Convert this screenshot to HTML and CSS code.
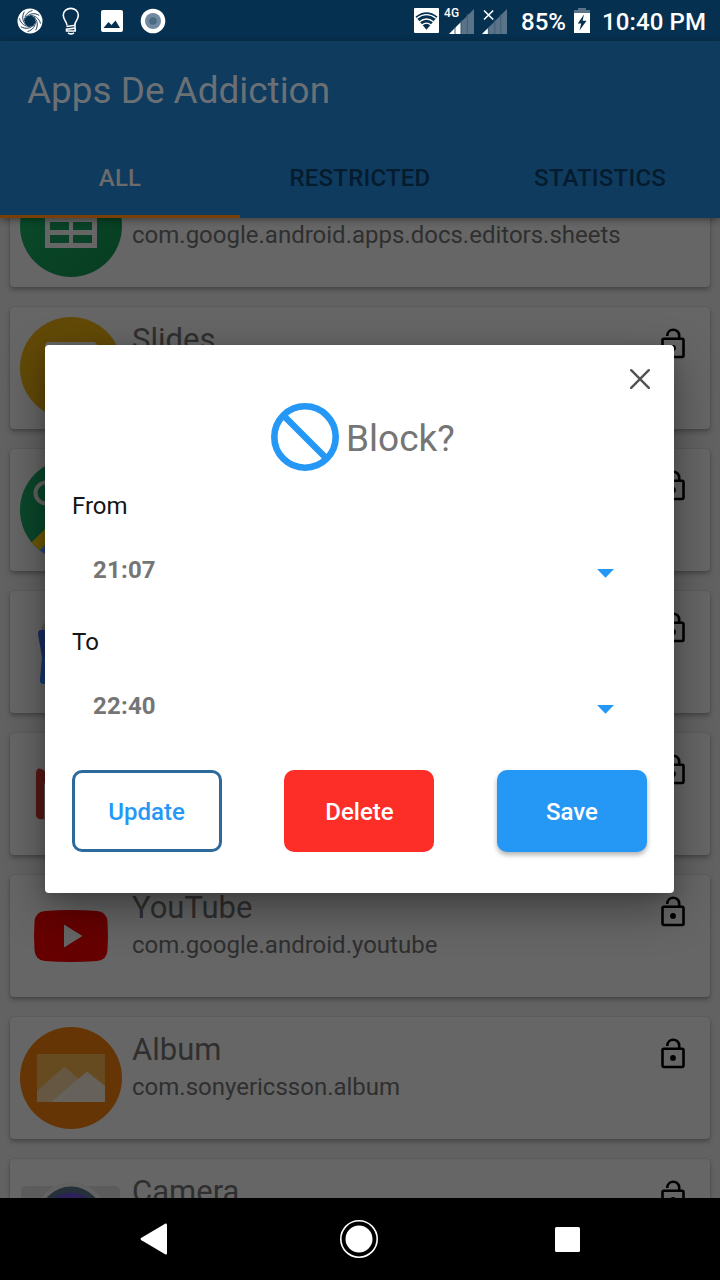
FILE: index.html
```html
<!DOCTYPE html>
<html lang="en">
<head>
<meta charset="utf-8">
<title>Apps De Addiction</title>
<link rel="stylesheet" href="styles.css">
</head>
<body>
<svg class="defs" width="0" height="0">
  <defs>
    <symbol id="lock" viewBox="0 0 24 32">
      <rect x="1.5" y="10.800" width="21" height="18.2" rx="1.4" fill="none" stroke="#000" stroke-width="2.6"/>
      <path d="M6.2 8.1C6.2 -.3 18.2 -.3 18.2 7.700V10.500" fill="none" stroke="#000" stroke-width="2.6"/>
      <circle cx="12" cy="19.900" r="2.9"/>
    </symbol>
  </defs>
</svg>
<div class="phone">
  <header class="status">
    <div class="notifications">
      <svg width="26" height="26" viewBox="0 0 26 26">
        <circle cx="13" cy="13" r="9" fill="none" stroke="#fff" stroke-width="7"/>
        <g fill="none" stroke="#06304f" stroke-width=".9">
          <path id="b" d="M13 7.500C18 7.500 22 10 23.500 15.500"/>
          <use href="#b" transform="rotate(45 13 13)"/><use href="#b" transform="rotate(90 13 13)"/><use href="#b" transform="rotate(135 13 13)"/><use href="#b" transform="rotate(180 13 13)"/><use href="#b" transform="rotate(225 13 13)"/><use href="#b" transform="rotate(270 13 13)"/><use href="#b" transform="rotate(315 13 13)"/>
        </g>
      </svg>
      <svg width="18" height="28" viewBox="0 0 18 28" fill="none" stroke="#fff" stroke-width="1.6">
        <path d="M5 18.5C5 14.5 1.3 13 1.3 8.3C1.3-1 16.3-1 16.3 8.3C16.3 13 12.8 14.5 12.8 18"/>
        <path d="M4.5 19.5L13 18.3V21L4.5 22.3V24H13.2V21.5M6 25.8Q9 28 12 25.8"/>
      </svg>
      <svg width="24" height="24" viewBox="0 0 24 24"><path d="M3 1H21Q23 1 23 3V21Q23 23 21 23H3Q1 23 1 21V3Q1 1 3 1ZM3.5 19H20L15.5 11.5L11.5 16L8.5 13Z" fill="#fff" fill-rule="evenodd"/></svg>
      <svg width="26" height="26" viewBox="0 0 26 26"><circle cx="13" cy="13" r="12.3" fill="#fff"/><circle cx="13" cy="13" r="8" fill="#718aa0"/><circle cx="13" cy="13" r="3.8" fill="#4b6a86"/></svg>
    </div>
    <div class="system">
      <svg class="wifi" width="28" height="28" viewBox="0 0 28 28">
        <rect x="1" y="1" width="25" height="25" rx="1" fill="#fff"/>
        <path d="M2.500 9.500Q13.500 .8 24.500 9.500L13.500 22.800Z" fill="#06304f"/>
        <g fill="none" stroke="#fff" stroke-width="1.300"><path d="M4 11.200Q13.500 4 23 11.200M6.500 14.800Q13.500 9.200 20.500 14.800M9 18Q13.500 14.300 18 18"/></g>
      </svg>
      <div class="signal">
        <svg width="25" height="25" viewBox="0 0 25 25"><path d="M0 25L25 0V25Z" fill="#5a7389"/><path d="M0 25L11.5 13.5V25Z" fill="#fff"/><path d="M6 18V25M12.3 11V25M18.3 5V25" stroke="#3f5e78"/></svg>
        <span class="net">4G</span>
      </div>
      <svg class="nosim" width="25" height="25" viewBox="0 0 25 25"><path d="M0 25L25 0V25Z" fill="#5a7389"/><path d="M0 25L5.8 19.2V25Z" fill="#fff"/><path d="M6.5 18V25M12.8 11V25M18.8 5V25" stroke="#3f5e78"/><path d="M2 1.5L11.2 10.5M11.2 1.5L2 10.5" stroke="#fff" stroke-width="1.6"/></svg>
      <span class="percent">85%</span>
      <svg class="battery" width="16" height="25" viewBox="0 0 16 25"><path d="M4 0H12V2H16V7H0V2H4Z" fill="#5a7389"/><path d="M0 5H16V25H0Z" fill="#fff"/><path d="M10 6.5L3.8 15.5H7.2L5.5 22.5L12.5 12.7H8.6Z" fill="#06304f"/></svg>
      <span class="clock">10:40 PM</span>
    </div>
  </header>
  <section class="appbar">
    <h1 class="apptitle">Apps De Addiction</h1>
    <nav class="tabs">
      <span class="tab active">ALL</span>
      <span class="tab">RESTRICTED</span>
      <span class="tab">STATISTICS</span>
    </nav>
  </section>
  <main class="list">
    <div class="cards">
      <article class="card">
        <svg class="icon" viewBox="0 0 102 102"><defs><linearGradient id="gs" x2="1" y2="1"><stop offset="0" stop-color="#094f2c"/><stop offset=".5" stop-color="#094326"/><stop offset="1" stop-color="#073d20"/></linearGradient></defs><circle cx="51" cy="51" r="51" fill="url(#gs)"/><path d="M25 20H77V73H25Z" fill="#666"/><path d="M30 47H49V55H30ZM53 47H72V55H53ZM30 60H49V68H30ZM53 60H72V68H53Z" fill="#094226"/></svg>
        <div class="info"><div class="name">Sheets</div><div class="package">com.google.android.apps.docs.editors.sheets</div></div>
      </article>
      <article class="card">
        <svg class="icon" viewBox="0 0 102 102"><circle cx="51" cy="51" r="51" fill="#624907"/><rect x="25" y="25" width="52" height="52" rx="4" fill="#666"/></svg>
        <div class="info"><div class="name">Slides</div><div class="package">com.google.android.apps.docs.editors.slides</div></div>
        <svg class="lock"><use href="#lock"/></svg>
      </article>
      <article class="card">
        <svg class="icon" viewBox="0 0 102 102"><clipPath id="cm"><circle cx="51" cy="51" r="51"/></clipPath><g clip-path="url(#cm)"><path d="M0 0H102V102H0Z" fill="#0a472b"/><path d="M8 87L60 35V60L20 102Z" fill="#6d5804"/><path d="M17 94L60 51V102Z" fill="#24437c"/><circle cx="26" cy="34" r="10.5" fill="none" stroke="#626262" stroke-width="4"/></g></svg>
        <div class="info"><div class="name">Maps</div><div class="package">com.google.android.apps.maps</div></div>
        <svg class="lock"><use href="#lock"/></svg>
      </article>
      <article class="card">
        <svg class="icon" viewBox="0 0 102 102"><path d="M21 32Q21 20 30 20H60V50H21Z" fill="#555"/><path d="M21 29H80V56H22L18 33Q18 29 21 29Z" fill="#1a2d61"/><path d="M22 56H80V83H24Q19 83 20 78Z" fill="#17376c"/></svg>
        <div class="info"><div class="name">Phone</div><div class="package">com.google.android.dialer</div></div>
        <svg class="lock"><use href="#lock"/></svg>
      </article>
      <article class="card">
        <svg class="icon" viewBox="0 0 102 102"><path d="M20 26H82V76H20Z" fill="#5d5d5d"/><path d="M16 30Q17 23 23 27L51 50L79 27L86 30V72Q85 77 79 76V40L51 62L24 40V76Q16 77 16 72Z" fill="#581814"/></svg>
        <div class="info"><div class="name">Gmail</div><div class="package">com.google.android.gm</div></div>
        <svg class="lock"><use href="#lock"/></svg>
      </article>
      <article class="card">
        <svg class="icon" viewBox="0 0 102 102"><path d="M25 26Q51 24 77 26Q87 27 87.500 37Q88.500 51 87.500 65Q87 75 77 76Q51 78 25 76Q15 75 14.500 65Q13.500 51 14.500 37Q15 27 25 26Z" fill="#660000"/><path d="M44 39.500L62.500 51L44 62.500Z" fill="#666"/></svg>
        <div class="info"><div class="name">YouTube</div><div class="package">com.google.android.youtube</div></div>
        <svg class="lock"><use href="#lock"/></svg>
      </article>
      <article class="card">
        <svg class="icon" viewBox="0 0 102 102"><circle cx="51" cy="51" r="51" fill="#653505"/><path d="M17 27H85V75H17Z" fill="#664a20"/><path d="M17 64L44.500 39.500L62 55L40 75H17Z" fill="#665743"/><path d="M31 75L67 44.500L85 59V75Z" fill="#66615a"/></svg>
        <div class="info"><div class="name">Album</div><div class="package">com.sonyericsson.album</div></div>
        <svg class="lock"><use href="#lock"/></svg>
      </article>
      <article class="card">
        <svg class="icon" viewBox="0 0 102 102"><rect x="1" y="17" width="99" height="70" rx="5" fill="#5c5c5c"/><circle cx="51" cy="49" r="36" fill="#636363"/><circle cx="51" cy="49" r="31.500" fill="#26303a"/><circle cx="51" cy="50" r="26.500" fill="#2c2258"/></svg>
        <div class="info"><div class="name">Camera</div><div class="package">com.sonyericsson.android.camera</div></div>
        <svg class="lock"><use href="#lock"/></svg>
      </article>
    </div>
  </main>
  <footer class="navbar">
    <svg width="28" height="32" viewBox="0 0 28 32"><path d="M25.500 .6L1.500 14.800Q-.5 16 1.500 17.200L25.500 31.400Q27 32 27 30V2Q27 0 25.500 .6Z" fill="#fff"/></svg>
    <svg width="40" height="40" viewBox="0 0 40 40"><circle cx="20" cy="20" r="18.200" fill="none" stroke="#fff" stroke-width="1.600"/><circle cx="20" cy="20" r="13.500" fill="#fff"/></svg>
    <svg width="25" height="25" viewBox="0 0 25 25"><rect width="25" height="25" rx="1.500" fill="#fff"/></svg>
  </footer>
  <div class="dialog">
    <div class="closerow"><svg width="20" height="20" viewBox="0 0 20 20"><path d="M1.200 1.200L18.800 18.800M18.800 1.200L1.200 18.800" stroke="#525252" stroke-width="2.400" stroke-linecap="round"/></svg></div>
    <div class="heading"><svg width="68" height="68" viewBox="0 0 68 68" fill="none" stroke="#2598f6" stroke-width="6.600"><circle cx="34" cy="34" r="30.700"/><path d="M12.500 12.500L55.500 55.500"/></svg><h2 class="question">Block?</h2></div>
    <div class="label from">From</div>
    <div class="value"><span class="time">21:07</span><svg width="17" height="9" viewBox="0 0 17 9"><path d="M0 0H17L8.500 8.700Z" fill="#2598f6"/></svg></div>
    <div class="label to">To</div>
    <div class="value"><span class="time">22:40</span><svg width="17" height="9" viewBox="0 0 17 9"><path d="M0 0H17L8.500 8.700Z" fill="#2598f6"/></svg></div>
    <div class="actions">
      <button class="btn update">Update</button>
      <button class="btn delete">Delete</button>
      <button class="btn save">Save</button>
    </div>
  </div>
</div>
</body>
</html>
```
FILE: styles.css
```css
* { box-sizing: border-box; }
body { margin: 0; font-family: Roboto, "Noto Sans", sans-serif; }
svg { display: block; flex: none; }
.defs { position: absolute; }
.phone { position: relative; width: 720px; height: 1280px; display: flex; flex-direction: column; overflow: hidden; background: #626262; }

.status { height: 41px; flex: none; background: #06304f; color: #fff; display: flex; justify-content: space-between; padding: 0 14px 0 17px; }
.notifications { display: flex; align-items: center; gap: 19px; }
.notifications svg:nth-child(3) { margin-left: 1px; }
.notifications svg:nth-child(4) { margin-left: -3px; }
.system { display: flex; align-items: center; font-size: 24px; font-weight: 500; }
.signal { position: relative; margin: 1px 8px 0 8px; }
.net { position: absolute; left: -5px; top: -3px; font-size: 12px; line-height: 14px; }
.nosim { margin-top: 1px; }
.percent { margin: 3px 8px 0 14px; }
.clock { margin: 3px 0 0 12px; letter-spacing: .1px; }

.appbar { height: 177px; flex: none; background: #0f3b5f; position: relative; z-index: 1; box-shadow: 0 2px 7px rgba(0,0,0,.4); display: flex; flex-direction: column; justify-content: space-between; }
.apptitle { margin: 27px 0 0 27px; font-size: 36.9px; line-height: 45px; font-weight: 400; color: #6b7075; }
.tabs { display: grid; grid-template-columns: repeat(3, 1fr); height: 82px; }
.tab { display: flex; align-items: center; justify-content: center; padding-top: 5px; border-bottom: 3px solid transparent; font-size: 24px; font-weight: 500; letter-spacing: .2px; color: #051c2f; }
.tab.active { color: #6b6b6b; border-color: #7a3f06; }

.list { flex: 1; min-height: 0; overflow: hidden; }
.cards { display: flex; flex-direction: column; gap: 20px; margin-top: -53px; padding: 0 10px; }
.card { height: 122px; flex: none; display: flex; padding: 10px; border-radius: 4px; background: #666; box-shadow: 0 3px 4px rgba(0,0,0,.25), 0 0 2px rgba(0,0,0,.15); }
.icon { width: 102px; height: 102px; }
.info { flex: 1; margin-left: 10px; color: #2f2f2f; }
.name { margin-top: 4px; font-size: 31px; line-height: 37px; }
.package { margin-top: 5px; font-size: 24px; line-height: 28px; }
.lock { width: 24px; height: 32px; margin: 11px 15px 0 0; }

.navbar { height: 82px; flex: none; background: #000; display: flex; align-items: center; justify-content: space-between; padding: 0 140px; }
.navbar svg:nth-child(2) { margin-right: 5px; }

.dialog { position: absolute; left: 45px; top: 345px; width: 629px; height: 548px; padding: 0 27px; border-radius: 4px; background: #fff; box-shadow: 0 16px 44px rgba(0,0,0,.38), 0 3px 12px rgba(0,0,0,.12); }
.closerow { height: 58px; display: flex; justify-content: flex-end; padding: 24px 0 0 0; margin-right: -3px; }
.heading { height: 68px; display: flex; align-items: center; padding-left: 199px; gap: 7px; }
.question { margin: 2px 0 0; font-size: 37px; font-weight: 400; color: #757575; }
.label { font-size: 24px; display: flex; align-items: center; color: #151515; }
.from { height: 70px; }
.to { height: 72px; margin-top: 7px; }
.value { height: 58px; display: flex; align-items: center; justify-content: space-between; padding: 0 33px 0 21px; }
.to + .value { height: 56px; }
.value svg { margin-top: 6px; }
.time { font-size: 24px; font-weight: 700; letter-spacing: .2px; color: #757575; }
.actions { margin-top: 36px; display: grid; grid-template-columns: 150px 150px 150px; column-gap: 62px; }
.btn { width: 150px; height: 82px; border: 0; border-radius: 10px; padding: 2px 0 0; font: 500 24px Roboto, sans-serif; color: #fff; }
.update { border: 3px solid #2d6a9b; background: #fff; color: #2598f6; padding-right: 1px; }
.delete { background: #fd2d27; padding-left: 1px; }
.save { margin-left: 1px; background: #2598f6; box-shadow: 0 3px 5px rgba(0,0,0,.3); }
```
